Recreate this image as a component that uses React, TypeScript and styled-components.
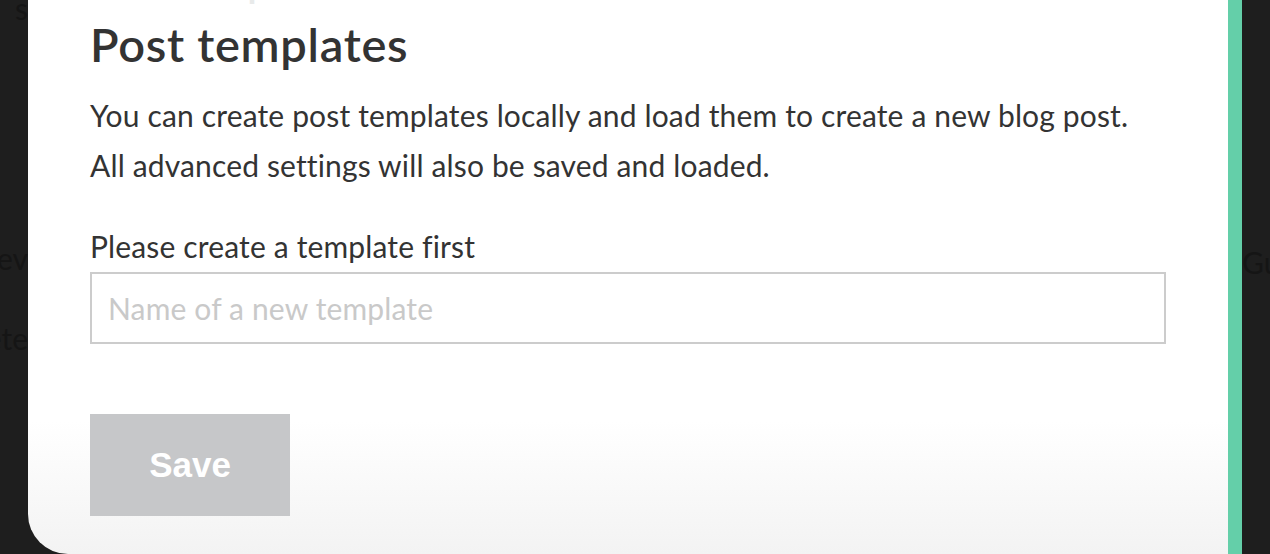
import React from 'react';
import styled, { createGlobalStyle } from 'styled-components';

const GlobalStyle = createGlobalStyle`
  html, body {
    margin: 0;
    padding: 0;
    background: #1e1e1e;
    overflow: hidden;
  }
`;

const Page = styled.div`
  display: flex;
  height: 554px;
  width: 1270px;
  background: #1e1e1e;
  font-family: 'Source Sans Pro', Lato, 'Noto Sans', sans-serif;
  overflow: hidden;
`;

const SideStrip = styled.div<{ $width: number; $align: 'left' | 'right' }>`
  width: ${p => p.$width}px;
  flex: none;
  overflow: hidden;
  display: flex;
  flex-direction: column;
  align-items: ${p => (p.$align === 'right' ? 'flex-end' : 'flex-start')};
  color: #151515;
  font-size: 30px;
  white-space: nowrap;
`;

const GhostLine = styled.div<{ $top: number }>`
  margin-top: ${p => p.$top}px;
  line-height: 40px;
`;

const GreenBar = styled.div`
  width: 14px;
  flex: none;
  background: #64cfa9;
`;

const Card = styled.div`
  width: 1200px;
  flex: none;
  background: linear-gradient(to bottom, #ffffff 0%, #ffffff 76%, #f3f3f3 100%);
  border-bottom-left-radius: 40px;
  padding: 0 62px;
  box-sizing: border-box;
  overflow: hidden;
  color: #333333;
`;

const FadedHeading = styled.div`
  margin-top: -36px;
  height: 40px;
  font-size: 40px;
  font-weight: 600;
  color: #e8eaea;
  line-height: 40px;
  overflow: hidden;
`;

const Title = styled.h1`
  margin: 15px 0 0;
  font-size: 47px;
  font-weight: 600;
  letter-spacing: 0.7px;
  line-height: 50px;
`;

const Intro = styled.p`
  margin: 21px 0 0;
  font-size: 30px;
  letter-spacing: 0.15px;
  line-height: 50px;
`;

const Label = styled.label`
  display: block;
  margin-top: 36px;
  font-size: 30px;
  letter-spacing: 0.15px;
  line-height: 40px;
`;

const Input = styled.input`
  display: block;
  box-sizing: border-box;
  width: 1076px;
  height: 72px;
  margin-top: 6px;
  border: 2px solid #cccccc;
  border-radius: 0;
  padding: 0 16px;
  font-family: inherit;
  font-size: 30px;
  letter-spacing: 0.15px;
  color: #333;
  background: #fff;
  outline: none;
  &::placeholder {
    color: #c9c9c9;
  }
`;

const SaveButton = styled.button`
  display: block;
  margin-top: 70px;
  width: 200px;
  height: 102px;
  border: none;
  background: #c6c7c9;
  color: #ffffff;
  font-family: 'Liberation Sans', Arial, sans-serif;
  font-weight: 700;
  font-size: 35px;
  cursor: not-allowed;
`;

export default function App() {
  return (
    <>
      <GlobalStyle />
      <Page>
        <SideStrip $width={28} $align="right">
          <GhostLine $top={-12}>s</GhostLine>
          <GhostLine $top={210}>Prev</GhostLine>
          <GhostLine $top={40}>Delete</GhostLine>
        </SideStrip>
        <Card>
          <FadedHeading>Post templates</FadedHeading>
          <Title>Post templates</Title>
          <Intro>
            You can create post templates locally and load them to create a new blog post.
            <br />
            All advanced settings will also be saved and loaded.
          </Intro>
          <Label htmlFor="tpl">Please create a template first</Label>
          <Input id="tpl" type="text" placeholder="Name of a new template" />
          <SaveButton disabled>Save</SaveButton>
        </Card>
        <GreenBar />
        <SideStrip $width={28} $align="left">
          <GhostLine $top={242}>Guide</GhostLine>
        </SideStrip>
      </Page>
    </>
  );
}
